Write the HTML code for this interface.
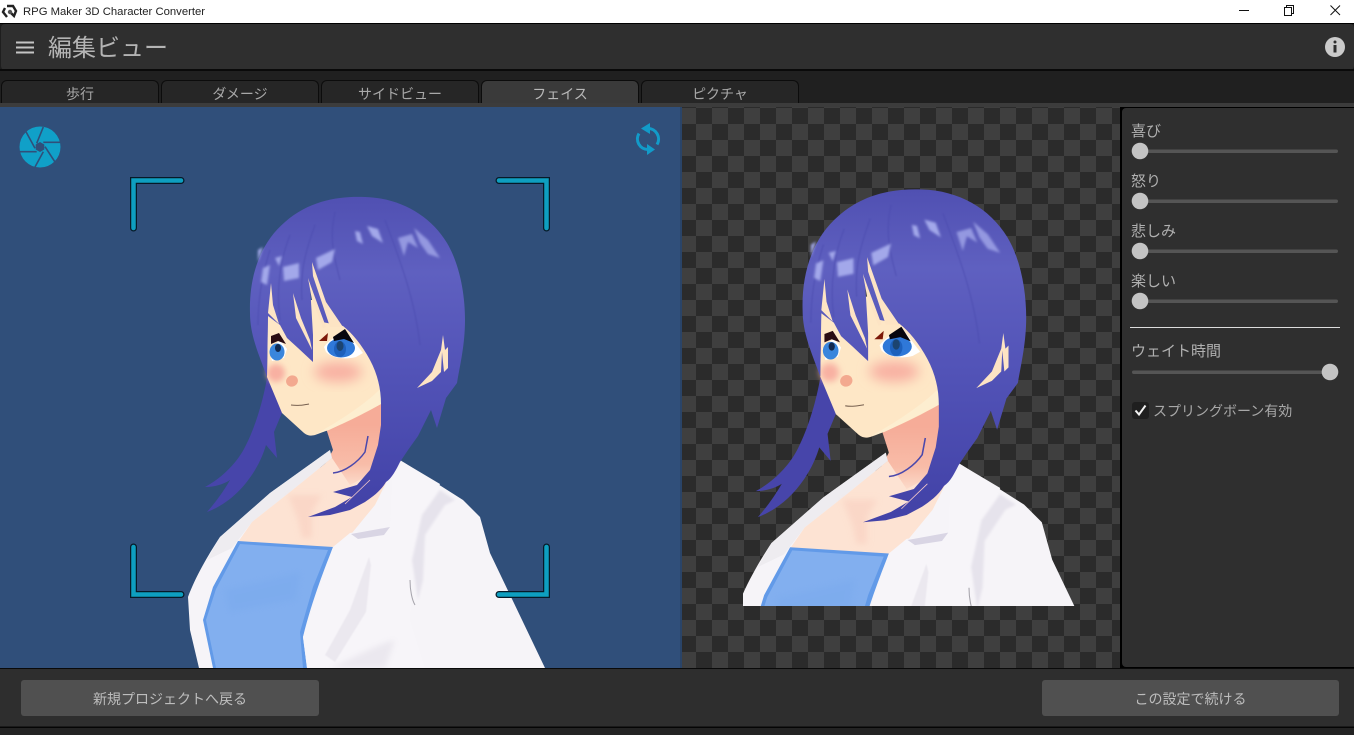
<!DOCTYPE html>
<html lang="ja"><head><meta charset="utf-8"><title>RPG Maker 3D Character Converter</title>
<style>
html,body{margin:0;padding:0;width:1354px;height:735px;overflow:hidden;background:#222}
body{position:relative;font-family:"Liberation Sans","Noto Sans CJK JP",sans-serif;color:#b4b4b4}
.a{position:absolute;white-space:nowrap;line-height:1}
.tab{position:absolute;top:80px;height:23px;width:158px;background:#262626;border:1px solid #0c0c0c;border-bottom:0;border-radius:6px 6px 0 0;box-sizing:border-box;text-align:center;font-size:14px;line-height:26px;color:#a8a8a8;overflow:hidden}
.tab.on{background:#3a3a3a;color:#b8b8b8}
.btn{position:absolute;top:680px;height:36px;background:#505050;border-radius:3px;text-align:center;font-size:14px;line-height:38px;color:#bdbdbd}
.l{font-size:15px;color:#b0b0b0;left:1131px}
</style></head><body>
<svg width="1354" height="735" viewBox="0 0 1354 735" style="position:absolute;left:0;top:0">
<defs>
<pattern id="ck" width="32" height="32" patternUnits="userSpaceOnUse" x="680" y="108"><rect width="32" height="32" fill="#2b2b2b"/><rect width="16" height="16" fill="#3f3f3f"/><rect x="16" y="16" width="16" height="16" fill="#3f3f3f"/></pattern>
<linearGradient id="hg" gradientUnits="userSpaceOnUse" x1="0" y1="197" x2="0" y2="500"><stop offset="0" stop-color="#5050b2"/><stop offset=".25" stop-color="#5f60c0"/><stop offset=".55" stop-color="#5354b8"/><stop offset="1" stop-color="#4343a8"/></linearGradient>
<linearGradient id="ng" gradientUnits="userSpaceOnUse" x1="0" y1="425" x2="0" y2="490"><stop offset="0" stop-color="#f6ac98"/><stop offset=".6" stop-color="#f8bca8"/><stop offset="1" stop-color="#fde2d2"/></linearGradient>
<filter id="b05" x="-20%" y="-20%" width="140%" height="140%"><feGaussianBlur stdDeviation=".5"/></filter>
<filter id="b1" x="-40%" y="-40%" width="180%" height="180%"><feGaussianBlur stdDeviation="1.3"/></filter>
<filter id="b2" x="-50%" y="-50%" width="200%" height="200%"><feGaussianBlur stdDeviation="6"/></filter>
<filter id="b3" x="-50%" y="-50%" width="200%" height="200%"><feGaussianBlur stdDeviation="3"/></filter>
<clipPath id="cl"><rect x="0" y="107" width="680" height="561"/></clipPath>
<clipPath id="cr"><rect x="743" y="107" width="334" height="499"/></clipPath>
<g id="ch">
 <!-- left strand -->
 <path d="M268 372C264 398 256 425 246 445C238 462 222 478 205 487C215 487 224 484 230 480C222 494 214 504 207 512C226 505 243 490 255 470C260 462 264 452 266 445L277 458L274 432L284 408Z" fill="#4745aa"/>
 <!-- neck -->
 <path d="M325 425L384 398L392 440L395 480L340 495L322 470L333 450Z" fill="url(#ng)"/>
 <!-- jacket -->
 <path d="M330 450L270 493L220 537C208 555 195 578 188 597L190 630L199 668L545 668L490 553L480 517L463 500L400 460L376 492L350 510L305 520L285 530Z" fill="#f6f4f8"/>
 <path d="M330 450L270 493L220 537L207 560L232 548L252 522L290 492L332 458Z" fill="#eeecf0"/>
 <!-- chest skin -->
 <path d="M332 458L290 492L252 522L236 545L336 548L352 533L375 505L395 465L378 470L350 485Z" fill="#fde3d3"/>
 <path d="M288 495L298 520L302 538L312 538L312 512L322 495Z" fill="#f9d2c2" opacity=".7" filter="url(#b3)"/>
 <!-- top -->
 <path d="M238 541L333 547C326 565 312 600 303 637L307 668L213 668L203 620L213 587Z" fill="#629ae8"/>
 <path d="M240 544L328 550L313 587L300 632L303 668L216 668L206 620L216 589Z" fill="#82afef"/>
 <path d="M225 590L300 572L296 600L230 612Z" fill="#78a8ec" opacity=".4" filter="url(#b3)"/>
 <!-- lapel -->
 <path d="M350 533L390 527L392 478L403 462L440 484L426 520L415 552L410 620L425 668L307 668L303 637L320 585L333 547Z" fill="#f7f5f9"/>
 <path d="M351 534L390 527L384 535L358 539Z" fill="#d9d5e4"/>
 <path d="M369 557L350 610L325 655L335 662L366 612L371 565Z" fill="#ebe8ef" filter="url(#b05)"/>
 <path d="M440 490L422 515L412 560L418 600L423 580L425 535L445 505L455 500Z" fill="#e6e3ec" filter="url(#b1)"/>
 <path d="M330 668C360 655 375 645 395 640L385 668Z" fill="#ebe8ef" filter="url(#b3)"/>
 <path d="M410 580C410 590 412 600 415 605" stroke="#a4a2aa" stroke-width="1" fill="none"/>
 <!-- face -->
 <path d="M268 300L381 300L381 404C360 416 335 428 315 435C311 436 308 436 304 433L282 413L267 377Z" fill="#fee7c6"/>
 <path d="M329 430C350 420 370 410 381 404L381 388C370 400 345 418 316 434Z" fill="#fdeed0"/>
 <ellipse cx="338" cy="372" rx="24" ry="10" fill="#f8b0a2" filter="url(#b2)"/>
 <ellipse cx="276" cy="373" rx="9" ry="9" fill="#f8b0a2" filter="url(#b3)"/>
 <ellipse cx="292" cy="381" rx="6" ry="5.500" fill="#f3a98f" transform="rotate(-25 292 381)"/>
 <path d="M291 405C298 406 303 405 309 404" stroke="#77604f" stroke-width="1" fill="none"/>
 <!-- eyes -->
 <path d="M324 347C330 338 343 332 350 336L363 353L356 357C345 360 332 358 326 352Z" fill="#fff"/>
 <ellipse cx="341" cy="348" rx="14" ry="9.500" fill="#2f78d8"/>
 <ellipse cx="340" cy="349" rx="6" ry="8" fill="#1d60bc"/>
 <ellipse cx="340" cy="346" rx="3.500" ry="5" fill="#1c4470"/>
 <path d="M333 337L345 329L354 343L344 339L334 341Z" fill="#08060e"/>
 <path d="M319 341L328 333L327 341Z" fill="#7c1808"/>
 <path d="M269 350L280 340L287 349L284 358L272 361Z" fill="#fff"/>
 <ellipse cx="277" cy="352" rx="7.500" ry="8.500" fill="#3a86dc"/>
 <ellipse cx="278" cy="348" rx="3" ry="4" fill="#122a50"/>
 <path d="M271 336L279 333L286 344L278 341L271 344Z" fill="#2a0c12"/>
 <!-- front hair -->
 <path d="M381 404C381 390 378 375 370 360C362 345 352 333 343 326L322 322L310 285L313 335L313 362L298 348L287 338L280 325L268 316L267 377C258 352 250 335 250 313C249 280 258 245 285 222C310 200 340 196 365 197C400 198 430 215 447 243C460 265 465 295 465 320C465 345 460 365 457 383L446 398L437 428L431 410L418 436L408 450L400 462C396 470 392 478 386 482C380 492 372 497 365 502L350 510L330 515L308 517L335 507L352 497L333 492L357 485L370 470L378 445L381 425Z" fill="url(#hg)"/>
 <path d="M271 283L268 313L279 324L273 305Z" fill="#fde4c4"/>
 <path d="M293 293L296 318L312 350L310 340L301 318Z" fill="#fde4c4"/>
 <path d="M312 262L313 276L330 327L343 327L326 302Z" fill="#fde4c4"/>
 <path d="M308 278L312 300L323 328L326 327L313 292Z" fill="#fde4c4"/>
 <path d="M443 335L441 350L432 372L417 388L432 381L441 372L442 352L444 372L448 368L448 347L445 350Z" fill="#fde4c4"/>
 <path d="M333 473C345 472 358 462 365 452L368 436" stroke="#4a48ac" stroke-width="1.500" fill="none"/>
 <path d="M345 504L370 480" stroke="#f4c8c8" stroke-width=".8"/>
 <!-- streaks -->
 <g stroke="#4b4cae" stroke-width="1.500" fill="none" opacity=".45" filter="url(#b05)">
  <path d="M270 250C262 275 258 300 258 325"/><path d="M290 235C280 260 276 290 280 320"/><path d="M315 225C306 250 300 270 302 300"/><path d="M335 212C330 235 332 250 340 280"/><path d="M385 220C400 260 415 300 420 345"/>
 </g>
 <!-- highlights -->
 <g fill="#a3a8ea" filter="url(#b1)">
  <path d="M316 258L335 249L332 262L318 270Z"/>
  <path d="M283 267L299 263L299 278L284 281Z"/>
  <path d="M263 268L270 265L267 285L261 282Z"/>
  <path d="M275 258L282 256L279 266Z"/>
  <path d="M355 231L360 232L363 244L357 241Z"/>
  <path d="M367 226L378 229L383 243L372 236Z"/>
  <path d="M398 238L412 234L418 248L408 242L404 256Z" opacity=".8"/>
  <path d="M414 228L428 240L440 258L428 254L420 243Z" opacity=".8"/>
  <path d="M258 250L263 247L258 262Z"/>
 </g>
</g>
</defs>
<!-- title bar -->
<rect width="1354" height="24" fill="#fff"/><rect y="23" width="1354" height="1" fill="#000"/>
<path d="M7 6L13 6L16 11L14 16L11 13M7 17L3 12L5 8" fill="none" stroke="#222" stroke-width="2.400"/><circle cx="10" cy="12" r="2.200" fill="#555"/>
<path d="M1239 10.500H1249" stroke="#111" stroke-width="1"/>
<path d="M1284.500 7.500h7v8h-7zM1286.500 7V5.500h7v8h-2" fill="none" stroke="#111" stroke-width="1"/>
<path d="M1330.500 5.500L1340 15M1340 5.500L1330.500 15" stroke="#111" stroke-width="1"/>
<!-- header -->
<rect y="24" width="1354" height="711" fill="#1e1e1e"/>
<rect x="1" y="24" width="1353" height="46" rx="4" fill="#2f2f2f"/>
<rect y="69" width="1354" height="2" fill="#0a0a0a"/>
<rect y="71" width="1354" height="33" fill="#202020"/>
<rect y="103" width="1354" height="4" fill="#3c3c3c"/>
<path d="M16 42.500H34M16 47.500H34M16 52.500H34" stroke="#c4c4c4" stroke-width="2"/>
<circle cx="1335" cy="47" r="10" fill="#cbcbcb"/>
<circle cx="1335" cy="42" r="1.500" fill="#2f2f2f"/><rect x="1333.500" y="45" width="3" height="7.500" fill="#2f2f2f"/>
<!-- main -->
<rect x="0" y="107" width="682" height="561" fill="#304f7a"/>
<rect x="682" y="107" width="438" height="561" fill="url(#ck)"/>
<rect x="680" y="107" width="2" height="561" fill="#2a4468"/>
<g clip-path="url(#cl)"><use href="#ch"/></g>
<g clip-path="url(#cr)"><use href="#ch" transform="translate(865 437) scale(1.04) translate(-310 -435)"/></g>
<!-- brackets -->
<g fill="none" stroke-linecap="round" stroke-linejoin="miter">
 <g stroke="#071a28" stroke-width="7"><path d="M181 180.500H133.500V228"/><path d="M499 180.500H546.500V228"/><path d="M133.500 547V594.500H181"/><path d="M546.500 547V594.500H499"/></g>
 <g stroke="#0e9fc0" stroke-width="4.500"><path d="M181 180.500H133.500V228"/><path d="M499 180.500H546.500V228"/><path d="M133.500 547V594.500H181"/><path d="M546.500 547V594.500H499"/></g>
</g>
<!-- camera -->
<circle cx="40" cy="147" r="20.500" fill="#10a0c8"/>
<g stroke="#304f7a" stroke-width="1.600" fill="none">
 <path d="M26 131.700L35 148.300"/><path d="M43.300 127L36.700 143.300"/><path d="M61 142.300H43.300"/><path d="M55 162L45 146.700"/><path d="M35 167L43.300 151.700"/><path d="M19 151.700H36.700"/>
</g>
<path d="M40 142l4.300 2.500v5l-4.300 2.500-4.300-2.500v-5z" fill="#304f7a"/>
<!-- refresh -->
<g fill="none" stroke="#129bc9" stroke-width="3">
 <path d="M648 128.500A10.500 10.500 0 0 1 657 144.500"/><path d="M648 149.500A10.500 10.500 0 0 1 639 133.500"/>
</g>
<path d="M641 128.500L650 123V134Z" fill="#129bc9"/><path d="M655 149.500L647 144V155Z" fill="#129bc9"/>
<!-- right panel -->
<rect x="1120" y="107" width="234" height="561" fill="#000"/>
<rect x="1122" y="108" width="240" height="559" rx="4" fill="#2f2f2f"/>
<g fill="#555"><rect x="1132" y="149.500" width="206" height="3.500" rx="1.700"/><rect x="1132" y="199.500" width="206" height="3.500" rx="1.700"/><rect x="1132" y="249.500" width="206" height="3.500" rx="1.700"/><rect x="1132" y="299.500" width="206" height="3.500" rx="1.700"/><rect x="1132" y="370.500" width="206" height="3.500" rx="1.700"/></g>
<g fill="#c4c4c4"><circle cx="1140" cy="151" r="8.300"/><circle cx="1140" cy="201" r="8.300"/><circle cx="1140" cy="251" r="8.300"/><circle cx="1140" cy="301" r="8.300"/><circle cx="1330" cy="372" r="8.300"/></g>
<rect x="1130" y="327" width="210" height="1" fill="#dcdcdc"/>
<rect x="1132" y="402" width="17" height="17" rx="3" fill="#1f1f1f"/>
<path d="M1135.500 410.500L1139 414.500L1145.500 405.500" fill="none" stroke="#f2f2f2" stroke-width="2"/>
<!-- bottom -->
<rect y="668" width="1354" height="1" fill="#0a0a0a"/>
<rect y="669" width="1354" height="58" fill="#2e2e2e"/>
<rect y="726.500" width="1354" height="1.500" fill="#050505"/>
<rect y="728" width="1354" height="7" fill="#232323"/>
</svg>
<div class="a" style="left:23px;top:7px;font-size:11.300px;color:#222">RPG Maker 3D Character Converter</div>
<div class="a" style="left:48px;top:37px;font-size:24px;color:#b4b4b4">編集ビュー</div>
<div class="tab" style="left:1px">歩行</div>
<div class="tab" style="left:161px">ダメージ</div>
<div class="tab" style="left:321px">サイドビュー</div>
<div class="tab on" style="left:481px">フェイス</div>
<div class="tab" style="left:641px">ピクチャ</div>
<div class="a l" style="top:124px">喜び</div>
<div class="a l" style="top:174px">怒り</div>
<div class="a l" style="top:224px">悲しみ</div>
<div class="a l" style="top:274px">楽しい</div>
<div class="a l" style="top:344px">ウェイト時間</div>
<div class="a" style="left:1153px;top:404px;font-size:14px;color:#a8a8a8">スプリングボーン有効</div>
<div class="btn" style="left:21px;width:298px">新規プロジェクトへ戻る</div>
<div class="btn" style="left:1042px;width:297px">この設定で続ける</div>
</body></html>
